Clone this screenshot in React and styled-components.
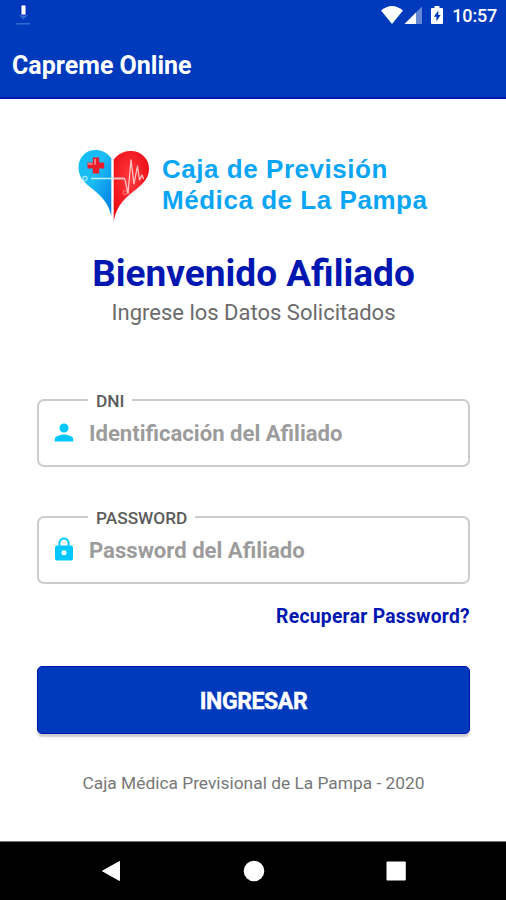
import React from "react";
import styled, { createGlobalStyle } from "styled-components";

const colors = {
  primary: "#003abc",
  primaryDark: "#0016b0",
  accent: "#00c8ff",
  logo: "#0aa5f5",
};

const GlobalStyle = createGlobalStyle`
  * {
    box-sizing: border-box;
  }
  body {
    margin: 0;
    background: white;
    font-family: Roboto, sans-serif;
  }
`;

const Screen = styled.div`
  width: 506px;
  height: 900px;
  display: flex;
  flex-direction: column;
  overflow: hidden;
  background: white;
`;

const StatusBar = styled.div`
  height: 32px;
  padding: 0 9px 0 16px;
  display: flex;
  justify-content: space-between;
  background: ${colors.primary};
  svg {
    display: block;
  }
`;

const StatusIcons = styled.div`
  display: flex;
`;

const Clock = styled.span`
  margin-left: 7px;
  font-size: 18px;
  line-height: 32px;
  font-weight: 500;
  letter-spacing: -0.2px;
  color: white;
`;

const AppBar = styled.header`
  height: 67px;
  padding: 3px 0 0 12px;
  display: flex;
  align-items: center;
  background: ${colors.primary};
  border-bottom: 2px solid ${colors.primaryDark};
`;

const AppTitle = styled.h1`
  margin: 0;
  font-size: 25px;
  line-height: 30px;
  font-weight: 700;
  color: white;
`;

const Content = styled.main`
  flex: 1;
  padding: 49px 36px 0 37px;
  display: flex;
  flex-direction: column;
`;

const Brand = styled.div`
  height: 76px;
  padding-left: 40px;
  display: flex;
`;

const BrandName = styled.div`
  margin: 6px 0 0 12px;
  font-family: "Liberation Sans", Arial, sans-serif;
  font-size: 26px;
  line-height: 31px;
  font-weight: 700;
  letter-spacing: 0.54px;
  white-space: nowrap;
  color: ${colors.logo};
`;

const Welcome = styled.h2`
  margin: 26px 0 0;
  font-size: 37px;
  line-height: 48px;
  font-weight: 700;
  text-align: center;
  color: ${colors.primaryDark};
`;

const Subtitle = styled.p`
  margin: 2px 0 0;
  font-size: 22px;
  line-height: 26px;
  text-align: center;
  color: #6b6b6b;
`;

const Field = styled.fieldset`
  width: 433px;
  height: 77px;
  margin: ${(props) => props.$top}px 0 0;
  padding: 9px 14px 0 13px;
  border: 2px solid #cccccc;
  border-radius: 7px;
  display: flex;
  align-items: center;
`;

const Legend = styled.legend`
  margin-left: 36px;
  padding: 2px 8px 0;
  font-size: 17.3px;
  line-height: 18px;
  font-weight: 500;
  color: #5c5c5c;
`;

const FieldIcon = styled.svg`
  flex: none;
  display: block;
  fill: ${colors.accent};
`;

const Placeholder = styled.span`
  margin-left: 13px;
  font-size: 22.1px;
  line-height: 28px;
  font-weight: 700;
  color: #9c9c9c;
`;

const Recover = styled.a`
  margin-top: 21px;
  align-self: flex-end;
  font-size: 19.3px;
  line-height: 24px;
  font-weight: 700;
  letter-spacing: 0.28px;
  color: ${colors.primaryDark};
`;

const Submit = styled.button`
  width: 433px;
  height: 68px;
  margin-top: 37px;
  padding: 2px 0 0;
  border: 1px solid ${colors.primaryDark};
  border-radius: 5px;
  background: ${colors.primary};
  box-shadow: 0 3px 2px rgba(0, 0, 0, 0.2);
  font-family: inherit;
  font-size: 23px;
  font-weight: 700;
  letter-spacing: -0.4px;
  color: white;
  -webkit-text-stroke: 0.4px white;
`;

const Footer = styled.p`
  margin: 38px 0 0;
  font-size: 17.35px;
  line-height: 22px;
  text-align: center;
  color: #777;
`;

const NavBar = styled.nav`
  height: 59px;
  padding: 0 99px 0 100px;
  display: flex;
  align-items: center;
  justify-content: space-between;
  background: black;
  border-top: 1px solid #777;
`;

function DownloadIcon() {
  return (
    <svg width="16" height="32" viewBox="0 0 16 32">
      <path d="M3 15h9l-4.5 4.5z" fill="#2f6cd0" />
      <path d="M0 23.8h14" stroke="#2f6cd0" strokeWidth="1.6" />
      <path d="M5 5h5v10H5z" fill="white" stroke="#0015c0" strokeWidth="0.8" />
    </svg>
  );
}

function SystemIcons() {
  return (
    <svg width="64" height="32" viewBox="0 0 64 32">
      <path d="M0 10.500Q11 1.500 22 10.500L11 24z" fill="white" />
      <path d="M41 6.500V24H23.500z" fill="white" fillOpacity="0.4" />
      <path d="M35 12.500V24H23.500z" fill="white" />
      <path
        d="M53.500 6h5v2h2.500q1 0 1 1v14q0 1-1 1H51q-1 0-1-1V9q0-1 1-1h2.500z"
        fill="white"
      />
      <path d="M57.300 10.500 52.800 16.700h2.600v4.800l4.200-6.500h-2.300z" fill={colors.primary} />
    </svg>
  );
}

function HeartLogo() {
  return (
    <svg width="73" height="76" viewBox="0 0 73 76">
      <defs>
        <linearGradient id="blue" x1="0" y1="0" x2="1" y2="1">
          <stop offset="0" stopColor="#12bdf5" />
          <stop offset="0.45" stopColor="#1cbcf4" />
          <stop offset="1" stopColor="#0078e0" />
        </linearGradient>
        <radialGradient id="red" cx="0.45" cy="0.4" r="0.65">
          <stop offset="0" stopColor="#ff3c40" />
          <stop offset="1" stopColor="#ea0710" />
        </radialGradient>
      </defs>
      <path
        d="M34.300 10C29 3 22 1.500 17.500 2 8 2.500 1.500 10 1.500 19.500c0 9.500 5.500 15 14 21.500 9 7 16.500 15 18.800 27z"
        fill="url(#blue)"
      />
      <path
        d="M36.700 11.500C42 4.500 48.500 3 55 3c9.500.5 17 8 17 17.500 0 9-5 14.500-13 21C49.500 49 40 56 36.700 73z"
        fill="url(#red)"
      />
      <path d="M15.800 9.500h6.400v5h5v6h-5v5h-6.400v-5H10.500v-6h5.300z" fill="#e91c2b" />
      <path d="M11 15h5v1.800h-5zM17 11h2v5.800h-2z" fill="#ff777b" />
      <circle cx="8" cy="30.500" r="2.100" fill="none" stroke="#a9eaff" strokeWidth="1.200" />
      <path d="M14 30.500h33" stroke="#bcefff" strokeWidth="1.400" />
      <path
        d="M37 30.500h10.500l1 3 2.500 12L54 12l3 24 3.500-18 2 14 2.500-5 1.500 4"
        fill="none"
        stroke="#ffc4c4"
        strokeWidth="1.300"
        strokeLinejoin="round"
      />
      <circle cx="48" cy="44.500" r="2" fill="none" stroke="#ff8080" strokeWidth="1" />
    </svg>
  );
}

function PersonIcon() {
  return (
    <FieldIcon width="24" height="28" viewBox="0 0 24 28">
      <circle cx="12" cy="9" r="4.500" />
      <path d="M2.800 22.500V20c0-3 6.200-4.600 9.200-4.600s9.200 1.600 9.200 4.600v2.500z" />
    </FieldIcon>
  );
}

function LockIcon() {
  return (
    <FieldIcon width="24" height="28" viewBox="0 0 24 28">
      <path
        fillRule="evenodd"
        d="M19 9.500h-1.500V7a5.500 5.500 0 0 0-11 0v2.500H5a2 2 0 0 0-2 2v11a2 2 0 0 0 2 2h14a2 2 0 0 0 2-2v-11a2 2 0 0 0-2-2zM8.400 9.500V7a3.600 3.600 0 0 1 7.200 0v2.500zM12 19.300a2.500 2.500 0 1 1 0-5 2.500 2.500 0 0 1 0 5z"
      />
    </FieldIcon>
  );
}

export default function App() {
  return (
    <Screen>
      <GlobalStyle />
      <StatusBar>
        <DownloadIcon />
        <StatusIcons>
          <SystemIcons />
          <Clock>10:57</Clock>
        </StatusIcons>
      </StatusBar>
      <AppBar>
        <AppTitle>Capreme Online</AppTitle>
      </AppBar>
      <Content>
        <Brand>
          <HeartLogo />
          <BrandName>
            <div>Caja de Previsión</div>
            <div>Médica de La Pampa</div>
          </BrandName>
        </Brand>
        <Welcome>Bienvenido Afiliado</Welcome>
        <Subtitle>Ingrese los Datos Solicitados</Subtitle>
        <Field $top={64}>
          <Legend>DNI</Legend>
          <PersonIcon />
          <Placeholder>Identificación del Afiliado</Placeholder>
        </Field>
        <Field $top={40}>
          <Legend>PASSWORD</Legend>
          <LockIcon />
          <Placeholder>Password del Afiliado</Placeholder>
        </Field>
        <Recover>Recuperar Password?</Recover>
        <Submit>INGRESAR</Submit>
        <Footer>Caja Médica Previsional de La Pampa - 2020</Footer>
      </Content>
      <NavBar>
        <svg width="22" height="24" viewBox="0 0 22 24">
          <path d="M2.500 12 19.500 2.500v19z" fill="white" stroke="white" strokeLinejoin="round" />
        </svg>
        <svg width="22" height="24" viewBox="0 0 22 24">
          <circle cx="11" cy="12" r="10.300" fill="white" />
        </svg>
        <svg width="22" height="24" viewBox="0 0 22 24">
          <rect x="1.500" y="2.500" width="19.300" height="19" rx="1" fill="white" />
        </svg>
      </NavBar>
    </Screen>
  );
}
